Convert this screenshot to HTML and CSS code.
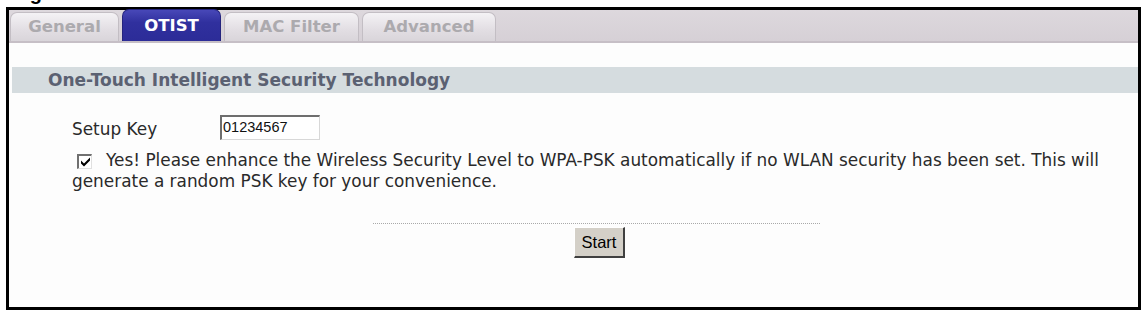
FILE: index.html
```html
<!DOCTYPE html>
<html>
<head>
<meta charset="utf-8">
<link rel="stylesheet" href="styles.css">
</head>
<body>
<div class="caption"><span class="caption-text">Figure</span></div>
<div class="frame">
  <div class="tabbar">
    <div class="tab tab-general">General</div>
    <div class="tab tab-active">OTIST</div>
    <div class="tab tab-mac">MAC Filter</div>
    <div class="tab tab-adv">Advanced</div>
  </div>
  <div class="section-title">One-Touch Intelligent Security Technology</div>
  <div class="form">
    <div class="setup-row">
      <span class="label">Setup Key</span>
      <span class="input">01234567</span>
    </div>
    <p class="check-para"><span class="checkbox"><svg width="11" height="11" viewBox="0 0 11 11"><path d="M1 4.5 L4 7.5 L10 1.5 L10 4.5 L4 10.5 L1 7.5 Z" fill="#000"/></svg></span>Yes! Please enhance the Wireless Security Level to WPA-PSK automatically if no WLAN security has been set. This will generate a random PSK key for your convenience.</p>
    <div class="actions">
      <div class="dots"></div>
      <button class="btn">Start</button>
    </div>
  </div>
</div>
</body>
</html>
```
FILE: styles.css
```css
html, body {
  margin: 0;
  padding: 0;
  background: #ffffff;
}
body {
  font-family: "DejaVu Sans", Verdana, sans-serif;
  color: #2a2a2a;
}
.caption {
  height: 7px;
  overflow: hidden;
  padding-left: 12px;
}
.caption-text {
  display: block;
  margin-top: -17px;
  font-family: "Liberation Sans", Arial, sans-serif;
  font-weight: bold;
  font-size: 20px;
  line-height: 20px;
  color: #000;
}
.frame {
  margin-left: 6px;
  width: 1129px;
  height: 297px;
  border: 3px solid #000;
  background: #fdfdfd;
}
.tabbar {
  height: 31px;
  border-bottom: 2px solid #c6bfc6;
  background: linear-gradient(#ddd8dd, #d6d0d6);
  display: flex;
  align-items: flex-end;
  gap: 3px;
  padding-left: 1px;
}
.tab {
  box-sizing: border-box;
  height: 29px;
  line-height: 27px;
  text-align: center;
  font-weight: bold;
  font-size: 16.5px;
  color: #acaaae;
  background: linear-gradient(#f4f2f5, #e2dee3 60%, #d9d5da);
  border: 1px solid #c3bec4;
  border-bottom: none;
  border-radius: 7px 7px 0 0;
}
.tab-general { width: 109px; }
.tab-active {
  width: 99px;
  height: 32px;
  line-height: 31px;
  color: #ffffff;
  background: linear-gradient(#4848b8, #30309e 40%, #2c2c98);
  border-color: #24247e;
}
.tab-mac { width: 135px; }
.tab-adv { width: 134px; }
.section-title {
  margin: 24px 0 0 3px;
  height: 26px;
  line-height: 26px;
  padding-left: 36px;
  background: #d5dcdf;
  color: #5b6172;
  font-weight: bold;
  font-size: 17px;
}
.form {
  padding-left: 63px;
}
.setup-row {
  margin-top: 22px;
  display: flex;
  align-items: center;
  height: 25px;
}
.label {
  width: 148px;
  font-size: 16.9px;
  padding-top: 2px;
}
.input {
  box-sizing: border-box;
  width: 100px;
  height: 25px;
  border-top: 2px solid #6e6e6e;
  border-left: 2px solid #6e6e6e;
  border-right: 1px solid #d8d8d8;
  border-bottom: 1px solid #d8d8d8;
  background: #fff;
  font-family: "Liberation Sans", Arial, sans-serif;
  font-size: 14.5px;
  line-height: 20px;
  padding-left: 1px;
  color: #111;
}
.check-para {
  margin: 10px 0 0 0;
  width: 1060px;
  font-size: 16.9px;
  line-height: 21px;
}
.checkbox {
  display: inline-flex;
  align-items: center;
  justify-content: center;
  box-sizing: border-box;
  width: 15px;
  height: 15px;
  margin: 0 14px 0 5px;
  vertical-align: -1px;
  border-top: 2px solid #707070;
  border-left: 2px solid #707070;
  border-right: 1px solid #e0e0e0;
  border-bottom: 1px solid #e0e0e0;
  background: #fff;
}
.actions {
  margin: 31px 0 0 301px;
  width: 447px;
  display: flex;
  flex-direction: column;
  align-items: center;
}
.dots {
  width: 100%;
  border-top: 1px dotted #a9a9a9;
}
.btn {
  margin: 3px 0 0 6px;
  box-sizing: border-box;
  width: 51px;
  height: 31px;
  padding: 0;
  background: #d4d0c8;
  border-top: 1px solid #ffffff;
  border-left: 1px solid #ffffff;
  border-right: 2px solid #404040;
  border-bottom: 2px solid #404040;
  font-family: "Liberation Sans", Arial, sans-serif;
  font-size: 16.5px;
  color: #000;
}
```
